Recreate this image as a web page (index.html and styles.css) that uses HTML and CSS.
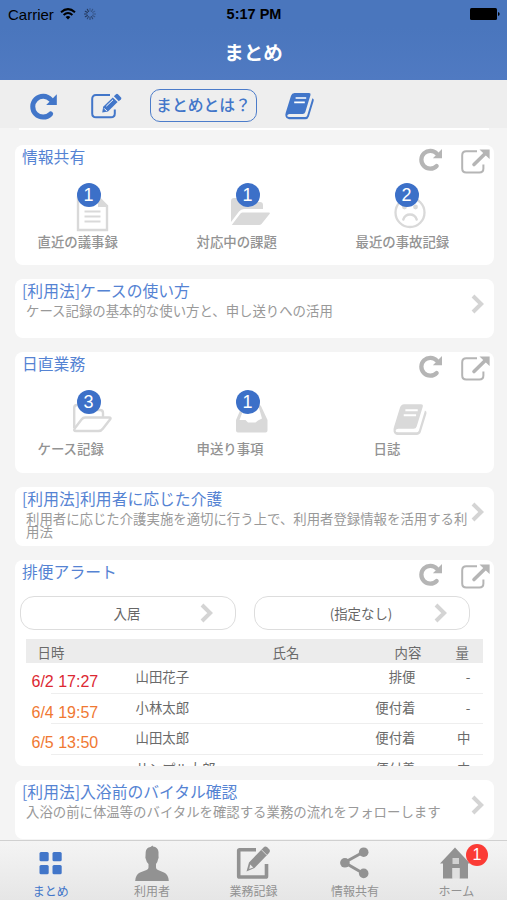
FILE: index.html
```
<!DOCTYPE html>
<html lang="ja">
<head>
  <meta charset="UTF-8">
  <title>まとめ</title>
  <link rel="stylesheet" href="styles.css">
</head>
<body>

  <svg class="sprite">
    <symbol id="refresh" viewBox="0 0 28 28">
      <path d="M20.6 20.9A10.4 10.4 0 1 1 20.8 6.6" fill="none" stroke="currentColor" stroke-width="5" stroke-linecap="round"/>
      <path d="M26.8 1.2V12H16.2Z" fill="currentColor"/>
    </symbol>
    <symbol id="external" viewBox="0 0 29 25">
      <path d="M16 2.3H5.2Q1.2 2.3 1.2 6.3V19.6Q1.2 23.6 5.2 23.6H18.4Q22.4 23.6 22.4 19.6V15.5" fill="none" stroke="currentColor" stroke-width="2"/>
      <path d="M13 15.5L24 4.8" stroke="currentColor" stroke-width="3.6" stroke-linecap="round"/>
      <path d="M18.5 0.4H28.6V10Z" fill="currentColor"/>
    </symbol>
    <symbol id="edit" viewBox="0 0 31 26">
      <path d="M19 2.1H5Q1.2 2.1 1.2 6V20.4Q1.2 24.2 5 24.2H20Q23.8 24.2 23.8 20.4V16.5" fill="none" stroke="currentColor" stroke-width="2"/>
      <path d="M11.2 19.6L12.2 13.8L21.8 4.4L26.6 9L17 18.6Z" fill="currentColor"/>
      <path d="M22.9 3.3L25 1.2Q26 .4 27 1.3L30 4.4Q30.8 5.3 30 6.2L27.8 8.2Z" fill="currentColor"/>
      <path d="M15.3 13.2L22 6.8M13.2 15.4L15.8 18" stroke="#fff" stroke-width="1"/>
    </symbol>
    <symbol id="book" viewBox="0 0 30 28">
      <path d="M9.5 1H24Q26 1 25.5 3L20.3 20Q19.7 21.9 17.7 21.9H4.5Q2.5 21.9 2.2 23.7Q2.3 25 4.5 25H20.2Q21.6 25 22.2 23.4L27.4 6.2Q29.2 7 28.7 8.8L23.9 24.5Q23 27.2 20.3 27.2H4Q1.2 27 .5 24.2Q.1 22.6 .8 20.6L6 3.8Q6.9 1.2 9.5 1Z" fill="currentColor"/>
      <path d="M10.6 6H21.2M9.2 10.3H19.8" stroke="#fff" stroke-width="1.7"/>
    </symbol>
    <symbol id="chevron" viewBox="0 0 13 20">
      <path d="M2 2L10.2 10L2 18" fill="none" stroke="currentColor" stroke-width="4"/>
    </symbol>
    <symbol id="document" viewBox="0 0 40 40">
      <path d="M6 4.5H26.5L35 13V37H6Z" fill="none" stroke="currentColor" stroke-width="2.4"/>
      <path d="M26 4V14H36Z" fill="currentColor"/>
      <path d="M12.5 18.5H28.5M12.5 23.5H28.5M12.5 28.5H28.5" stroke="currentColor" stroke-width="2"/>
    </symbol>
    <symbol id="folder" viewBox="0 0 40 40">
      <path d="M0 29V8Q0 5 3 5H11L14 9H29Q32 9 32 12V16H13Q10 16 8 18.5Z" fill="currentColor"/>
      <path d="M11.5 19.5H38Q39.5 19.5 38.5 21L30.5 31Q29.5 32 28 32H1.5Q.5 32 1.5 31L9.5 20.5Q10.5 19.5 11.5 19.5Z" fill="currentColor"/>
    </symbol>
    <symbol id="folder-open" viewBox="0 0 40 40">
      <path d="M2.2 28V8Q2.2 5 5 5H11L14 10H28Q31 10 31 13V17" fill="none" stroke="currentColor" stroke-width="2.4"/>
      <path d="M13 17.5H37Q39.5 17.5 38 19.5L31 28.5Q29.3 31 26.5 31H4Q1 31 3 28L9.5 19.5Q11 17.5 13 17.5Z" fill="none" stroke="currentColor" stroke-width="2.4"/>
    </symbol>
    <symbol id="sad" viewBox="0 0 40 40">
      <circle cx="20" cy="19.5" r="14.5" fill="none" stroke="currentColor" stroke-width="2.3"/>
      <circle cx="14.5" cy="14" r="2.4" fill="currentColor"/>
      <circle cx="25.5" cy="14" r="2.4" fill="currentColor"/>
      <path d="M13.3 26.5Q15 21.5 20 21.5T26.7 26.5" fill="none" stroke="currentColor" stroke-width="2.4" stroke-linecap="round"/>
    </symbol>
    <symbol id="inbox" viewBox="0 0 40 40">
      <path d="M5 20L11 6Q11.5 5 13 5H28Q29.5 5 30 6L36.5 20V30.5Q36.5 32.5 34.5 32.5H7Q5 32.5 5 30.5ZM8.5 20H14.5L17 22.5H24.5L27 20.5L31 18.5L28 8H13Z" fill="currentColor" fill-rule="evenodd"/>
    </symbol>
  </svg>

  <div class="status-bar">
    <div class="carrier">
      <span>Carrier</span>
      <svg class="wifi" viewBox="0 0 16 12">
        <path d="M1 4.3Q8-2 15 4.3M3.6 7Q8 3 12.4 7" fill="none" stroke="#000" stroke-width="2"/>
        <path d="M5.6 8.9Q8 6.9 10.4 8.9L8 11.5Z"/>
      </svg>
      <svg class="spinner" viewBox="-6 -6 12 12" stroke="#1d2d4a" stroke-width="1.1" stroke-linecap="round">
        <path d="M0-3V-5.5M2.6-1.5L4.7-2.7" opacity=".35"/>
        <path d="M1.5-2.6L2.7-4.7M3 0H5.5M2.6 1.5L4.7 2.7" opacity=".45"/>
        <path d="M1.5 2.6L2.7 4.7M0 3V5.5M-1.5 2.6L-2.7 4.7" opacity=".65"/>
        <path d="M-2.6 1.5L-4.7 2.7M-3 0H-5.5M-2.6-1.5L-4.7-2.7M-1.5-2.6L-2.7-4.7" opacity=".85"/>
      </svg>
    </div>
    <div class="time">5:17 PM</div>
    <svg class="battery" viewBox="0 0 30 12">
      <rect width="27" height="12" rx="1.5"/>
      <path d="M28 4Q29.7 4.3 29.7 6T28 8Z"/>
    </svg>
  </div>

  <header>まとめ</header>

  <nav class="toolbar">
    <svg class="tool-refresh"><use href="#refresh"/></svg>
    <svg class="tool-edit"><use href="#edit"/></svg>
    <button class="about">まとめとは？</button>
    <svg class="tool-book"><use href="#book"/></svg>
  </nav>

  <main>
    <div class="card-end"></div>

    <section class="card menu">
      <div class="card-head">
        <h2>情報共有</h2>
        <svg class="icon-refresh"><use href="#refresh"/></svg>
        <svg class="icon-external"><use href="#external"/></svg>
      </div>
      <div class="items">
        <div class="item">
          <div class="item-icon"><svg><use href="#document"/></svg><span class="badge">1</span></div>
          <p>直近の議事録</p>
        </div>
        <div class="item">
          <div class="item-icon"><svg><use href="#folder"/></svg><span class="badge">1</span></div>
          <p>対応中の課題</p>
        </div>
        <div class="item">
          <div class="item-icon"><svg><use href="#sad"/></svg><span class="badge">2</span></div>
          <p>最近の事故記録</p>
        </div>
      </div>
    </section>

    <section class="card guide">
      <h2>[利用法]ケースの使い方</h2>
      <p>ケース記録の基本的な使い方と、申し送りへの活用</p>
      <svg class="chevron"><use href="#chevron"/></svg>
    </section>

    <section class="card menu">
      <div class="card-head">
        <h2>日直業務</h2>
        <svg class="icon-refresh"><use href="#refresh"/></svg>
        <svg class="icon-external"><use href="#external"/></svg>
      </div>
      <div class="items">
        <div class="item">
          <div class="item-icon"><svg><use href="#folder-open"/></svg><span class="badge">3</span></div>
          <p>ケース記録</p>
        </div>
        <div class="item">
          <div class="item-icon"><svg><use href="#inbox"/></svg><span class="badge">1</span></div>
          <p>申送り事項</p>
        </div>
        <div class="item diary">
          <div class="item-icon"><svg><use href="#book"/></svg></div>
          <p>日誌</p>
        </div>
      </div>
    </section>

    <section class="card guide">
      <h2>[利用法]利用者に応じた介護</h2>
      <p>利用者に応じた介護実施を適切に行う上で、利用者登録情報を活用する利用法</p>
      <svg class="chevron"><use href="#chevron"/></svg>
    </section>

    <section class="card alert">
      <div class="card-head">
        <h2>排便アラート</h2>
        <svg class="icon-refresh"><use href="#refresh"/></svg>
        <svg class="icon-external"><use href="#external"/></svg>
      </div>
      <div class="filters">
        <button>入居<svg class="chevron"><use href="#chevron"/></svg></button>
        <button>(指定なし)<svg class="chevron"><use href="#chevron"/></svg></button>
      </div>
      <div class="table">
        <div class="table-head">
          <span>日時</span><span>氏名</span><span>内容</span><span>量</span>
        </div>
        <div class="row">
          <span class="date late">6/2 17:27</span><span>山田花子</span><span>排便</span><span>-</span>
        </div>
        <div class="row">
          <span class="date">6/4 19:57</span><span>小林太郎</span><span>便付着</span><span>-</span>
        </div>
        <div class="row">
          <span class="date">6/5 13:50</span><span>山田太郎</span><span>便付着</span><span>中</span>
        </div>
        <div class="row">
          <span class="date"></span><span>サンプル太郎</span><span>便付着</span><span>中</span>
        </div>
      </div>
    </section>

    <section class="card guide">
      <h2>[利用法]入浴前のバイタル確認</h2>
      <p>入浴の前に体温等のバイタルを確認する業務の流れをフォローします</p>
      <svg class="chevron"><use href="#chevron"/></svg>
    </section>
  </main>

  <footer>
    <a class="tab active">
      <svg viewBox="0 0 36 36" fill="currentColor">
        <rect x="6.5" y="7" width="9.2" height="9.2" rx="1.5"/>
        <rect x="19.5" y="7" width="9.2" height="9.2" rx="1.5"/>
        <rect x="6.5" y="20" width="9.2" height="9.2" rx="1.5"/>
        <rect x="19.5" y="20" width="9.2" height="9.2" rx="1.5"/>
      </svg>
      まとめ
    </a>
    <a class="tab">
      <svg viewBox="0 0 36 36">
        <path d="M18.5 .5L19 1.5Q24 2 24.5 7V11Q25 12.5 24 14.5Q23.5 17.5 22 19V22.5Q22 24 24 25L30 27.5Q34.5 29.5 34.8 36H1.2Q1.5 29.5 6 27.5L12.5 25Q14.5 24 14.5 22.5V19Q12.5 17.5 12 14.5Q11 12.5 11.5 11L11.7 7Q12.2 2.5 16.5 2Z" fill="currentColor"/>
      </svg>
      利用者
    </a>
    <a class="tab">
      <svg viewBox="0 0 36 36">
        <path d="M20 4.8H3.5Q2.7 4.8 2.7 5.6V31.2Q2.7 32 3.5 32H29.7Q30.5 32 30.5 31.2V19" fill="none" stroke="currentColor" stroke-width="3.6"/>
        <path d="M10.5 26.5L13 17.5L27.5 2.5Q29 1 31 2L33.5 4.5Q34.5 6.5 33 8L18.5 23Z" fill="currentColor"/>
        <path d="M14.2 19.5L17.3 22.5L13.2 24Z" fill="#ececec"/>
        <path d="M25.5 4.8L30.7 10" stroke="#ececec" stroke-width=".8"/>
      </svg>
      業務記録
    </a>
    <a class="tab">
      <svg viewBox="0 0 36 36">
        <path d="M26.5 7L7.5 17.5L26.5 28.5" fill="none" stroke="currentColor" stroke-width="3"/>
        <circle cx="26.7" cy="7.2" r="4.8" fill="currentColor"/>
        <circle cx="7.9" cy="17.8" r="4.8" fill="currentColor"/>
        <circle cx="26.7" cy="28.4" r="4.8" fill="currentColor"/>
      </svg>
      情報共有
    </a>
    <a class="tab">
      <svg viewBox="0 0 36 36">
        <path d="M17 2.5L32 18.5H30V33.5H21.5V23H14.5V33.5H5V18.5H2Z" fill="currentColor"/>
        <path d="M14.5 13H21V19H14.5Z" fill="#d2d2d2"/>
        <path d="M14.5 23H21.5V33.5H14.5Z" fill="#e0e0e0"/>
      </svg>
      ホーム
      <span class="tab-badge">1</span>
    </a>
  </footer>

</body>
</html>
```
FILE: styles.css
```
* {
  margin: 0;
  padding: 0;
  box-sizing: border-box;
}

body {
  height: 900px;
  display: flex;
  flex-direction: column;
  overflow: hidden;
  background-color: #f4f4f4;
  color: #6a6a6a;
  font-family: "Noto Sans CJK JP", sans-serif;
}

.sprite {
  display: none;
}

svg, button, h2 {
  flex-shrink: 0;
}

.status-bar {
  height: 28px;
  padding: 0 7px 0 8px;
  display: grid;
  grid-template-columns: 1fr auto 1fr;
  align-items: center;
  background-color: #4a76bd;
  color: #000;
  font-family: "Liberation Sans", sans-serif;
  font-size: 15px;
}

.carrier {
  display: flex;
  align-items: center;
}

.wifi {
  width: 16px;
  height: 12px;
  margin-left: 6px;
}

.spinner {
  width: 12px;
  height: 12px;
  margin-left: 8px;
}

.time {
  font-weight: bold;
  font-size: 14.5px;
}

.battery {
  width: 30px;
  height: 12px;
  justify-self: end;
}

header {
  height: 51.5px;
  flex-shrink: 0;
  background: linear-gradient(#4a76bd, #507ac2);
  color: #fff;
  font-size: 19.5px;
  font-weight: bold;
  line-height: 47px;
  text-align: center;
}

.toolbar {
  height: 48.5px;
  flex-shrink: 0;
  display: flex;
  align-items: center;
  padding: 3px 0 0 30px;
  background-color: #eee;
  color: #4276c9;
}

.tool-refresh {
  width: 28px;
  height: 28px;
  margin-top: 3px;
}

.tool-edit {
  width: 31px;
  height: 26px;
  margin: 1px 0 0 33px;
}

.about {
  width: 107px;
  height: 33px;
  margin-left: 28px;
  background: none;
  border: 1px solid #4c7cca;
  border-radius: 10px;
  color: #4276c9;
  font-family: inherit;
  font-size: 15.8px;
  font-weight: 500;
  line-height: 30px;
}

.tool-book {
  width: 30px;
  height: 28px;
  margin: 2px 0 0 28px;
}

main {
  flex: 1;
  min-height: 0;
  overflow: hidden;
  padding: 0 13.5px 0 14.5px;
  display: flex;
  flex-direction: column;
  gap: 14.3px;
}

.card-end {
  height: 2.4px;
  flex-shrink: 0;
  margin: 0 4.5px;
  background-color: #fff;
}

.card {
  position: relative;
  flex-shrink: 0;
  background-color: #fff;
  border-radius: 8px;
  overflow: hidden;
}

h2 {
  color: #5583d3;
  font-size: 15.8px;
  font-weight: 400;
  line-height: 23px;
}

.menu {
  height: 120.2px;
}

.card-head {
  height: 36px;
  display: flex;
  padding: 0 4px 0 7.5px;
  color: #b5b5b5;
}

.card-head h2 {
  flex: 1;
}

.icon-refresh {
  width: 24px;
  height: 24px;
  margin: 3px 18px 0 0;
}

.icon-external {
  width: 29px;
  height: 25px;
  margin-top: 4px;
}

.items {
  display: grid;
  grid-template-columns: repeat(3, 159px);
  padding: 12px 0 0 23px;
  font-size: 13.4px;
  font-weight: 500;
  color: #939393;
}

.item-icon {
  position: relative;
  width: 40px;
  height: 40px;
  margin-left: 34.5px;
  color: #d9d9d9;
}

.item-icon svg {
  display: block;
  width: 40px;
  height: 40px;
}

.item p {
  line-height: 16px;
}

.diary .item-icon {
  padding: 3px 0 0 3px;
}

.diary .item-icon svg {
  width: 35px;
  height: 33px;
}

.diary p {
  padding-left: 18px;
}

.badge {
  position: absolute;
  top: -10px;
  left: 4.5px;
  width: 24px;
  height: 24px;
  border-radius: 50%;
  background-color: #3c70c8;
  color: #fff;
  font-family: "Liberation Sans", sans-serif;
  font-size: 18px;
  font-weight: 400;
  line-height: 24px;
  text-align: center;
}

.guide {
  height: 59px;
  padding: 0 20px 0 7.5px;
}

.guide p {
  padding-left: 4px;
  color: #999;
  font-size: 13.4px;
  line-height: 13.5px;
  margin-top: 2px;
}

.chevron {
  width: 13px;
  height: 20px;
  color: #d4d4d4;
}

.guide .chevron {
  position: absolute;
  top: 15px;
  right: 10px;
}

.alert {
  height: 205.5px;
}

.filters {
  display: flex;
  gap: 18px;
  padding-left: 5px;
}

.filters button {
  position: relative;
  width: 216px;
  height: 34px;
  padding-right: 1px;
  background-color: #fff;
  border: 1px solid #ddd;
  border-radius: 14px;
  color: #666;
  font-family: inherit;
  font-size: 13.4px;
}

.filters .chevron {
  position: absolute;
  top: 6px;
  right: 22px;
}

.table {
  margin: 8.5px 10.5px 0 11px;
  font-size: 13.4px;
}

.table-head {
  display: grid;
  grid-template-columns: 235px 122px 61px 1fr;
  height: 24.5px;
  padding-left: 12px;
  background-color: #ececec;
  line-height: 26px;
}

.row {
  display: grid;
  grid-template-columns: 104px 200px 80px 55px;
  height: 30.5px;
  padding-left: 6px;
  line-height: 27px;
  background: linear-gradient(#eee, #eee) 25px 100% / 100% 1px no-repeat;
}

.row span:nth-child(n+3) {
  text-align: right;
}

.row .date {
  color: #f07832;
  font-family: "Liberation Sans", sans-serif;
  font-size: 16px;
  line-height: 37px;
}

.row .late {
  color: #dc2832;
}

footer {
  height: 60px;
  flex-shrink: 0;
  display: flex;
  border-top: 1px solid #d0d0d0;
  background: linear-gradient(#f4f4f4, #e6e6e6);
}

.tab {
  position: relative;
  flex: 1;
  display: flex;
  flex-direction: column;
  align-items: center;
  padding-top: 4px;
  color: #929292;
  font-size: 12px;
  line-height: 19px;
}

.tab svg {
  width: 36px;
  height: 36px;
}

.active {
  color: #4276c9;
}

.tab-badge {
  position: absolute;
  top: 3px;
  right: 19px;
  width: 22px;
  height: 22px;
  border-radius: 50%;
  background-color: #fb3b35;
  color: #fff;
  font-family: "Liberation Sans", sans-serif;
  font-size: 16px;
  line-height: 22px;
  text-align: center;
}
```
